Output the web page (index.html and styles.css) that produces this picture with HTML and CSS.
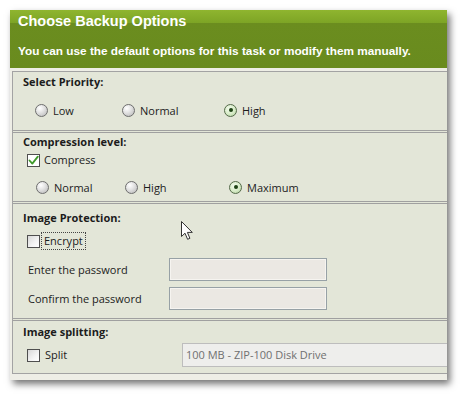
FILE: index.html
```html
<!DOCTYPE html>
<html>
<head>
<meta charset="utf-8">
<link rel="stylesheet" href="styles.css">
</head>
<body>
<div class="page">
  <div class="window">
    <div class="header">
      <div class="title">Choose Backup Options</div>
      <div class="subtitle">You can use the default options for this task or modify them manually.</div>
    </div>
    <div class="content">
      <section class="sec sec1">
        <div class="sec-title">Select Priority:</div>
        <div class="radio-row row-a">
          <div class="opt w87"><span class="radio"></span><span>Low</span></div>
          <div class="opt w102"><span class="radio"></span><span>Normal</span></div>
          <div class="opt"><span class="radio on"></span><span>High</span></div>
        </div>
      </section>
      <section class="sec sec2">
        <div class="sec-title">Compression level:</div>
        <div class="check-row">
          <span class="check"><svg width="11" height="11" viewBox="0 0 11 11"><path d="M1.5 5.5 L4.3 8.6 L9.8 1.6" fill="none" stroke="#3e9a2a" stroke-width="1.8" stroke-linejoin="round" stroke-linecap="round"/></svg></span>
          <span class="check-label">Compress</span>
        </div>
        <div class="radio-row row-b">
          <div class="opt w89"><span class="radio"></span><span>Normal</span></div>
          <div class="opt w104"><span class="radio"></span><span>High</span></div>
          <div class="opt"><span class="radio on"></span><span>Maximum</span></div>
        </div>
      </section>
      <section class="sec sec3">
        <div class="sec-title">Image Protection:</div>
        <div class="check-row enc">
          <span class="check"></span>
          <span class="check-label focus">Encrypt</span>
        </div>
        <div class="field-row first">
          <span class="field-label">Enter the password</span>
          <span class="field"></span>
        </div>
        <div class="field-row">
          <span class="field-label">Confirm the password</span>
          <span class="field"></span>
        </div>
      </section>
      <section class="sec sec4">
        <div class="sec-title">Image splitting:</div>
        <div class="split-row">
          <div class="split-check">
            <span class="check"></span>
            <span class="check-label">Split</span>
          </div>
          <div class="combo">100 MB - ZIP-100 Disk Drive</div>
        </div>
      </section>
    </div>
  </div>
  <svg class="cursor" width="13" height="20" viewBox="0 0 13 20"><path d="M0.5 0.5 L0.5 15.5 L4 12.2 L6.6 18.3 L8.9 17.3 L6.4 11.4 L11.3 11.4 Z" fill="#fff" stroke="#333" stroke-width="1" stroke-linejoin="round"/></svg>
</div>
</body>
</html>
```

FILE: styles.css
```css
html, body {
  margin: 0;
  padding: 0;
  background: #ffffff;
}
.page {
  position: relative;
  width: 465px;
  height: 399px;
  padding: 10px 0 0 10px;
  box-sizing: border-box;
  font-family: "Open Sans", "Noto Sans", sans-serif;
  font-size: 11px;
  color: #1c1c1c;
}
.window {
  width: 437px;
  background: #eeeee6;
  box-shadow: 3px 4px 7px rgba(0, 0, 0, 0.55);
  padding: 0 0 6px 2px;
  box-sizing: border-box;
  overflow: hidden;
}
.header {
  margin-left: -2px;
  height: 58px;
  background: linear-gradient(#8fb52f 0px, #7da425 13px, #6b8d1f 13px, #698b1e 58px);
  color: #ffffff;
  font-family: "Liberation Sans", Arial, sans-serif;
  font-weight: bold;
  padding-left: 8px;
  margin-bottom: 3px;
}
.title {
  font-size: 14.5px;
  line-height: 18px;
  padding-top: 2px;
}
.subtitle {
  font-size: 11.8px;
  line-height: 16px;
  margin-top: 13px;
}
.content {
  background: #e3e6d8;
  border-left: 1px solid #a3a3a3;
  border-top: 1px solid #a3a3a3;
  border-bottom: 1px solid #a3a3a3;
}
.sec {
  border-bottom: 3px double #a0a0a0;
}
.sec:last-child {
  border-bottom: none;
}
.sec-title {
  font-weight: bold;
  padding-left: 10px;
  height: 18px;
  line-height: 18px;
}
.sec1 .sec-title { height: 20px; line-height: 20px; }
.sec1 { padding-bottom: 11px; }
.sec2 { padding-bottom: 5px; }
.sec3 { padding-top: 5px; padding-bottom: 8px; }
.sec4 { padding-top: 2px; padding-bottom: 6px; }

.radio-row {
  display: flex;
  align-items: center;
  height: 18px;
}
.row-a { margin-top: 9px; padding-left: 22px; }
.row-b { margin-top: 10px; padding-left: 23px; }
.opt {
  display: flex;
  align-items: center;
  gap: 5px;
}
.w87 { width: 87px; }
.w102 { width: 102px; }
.w89 { width: 89px; }
.w104 { width: 104px; }

.radio {
  width: 13px;
  height: 13px;
  box-sizing: border-box;
  border-radius: 50%;
  border: 1px solid #6e6e6e;
  background: radial-gradient(circle at 35% 30%, #ffffff 0%, #e4e4e4 40%, #b4b4b4 100%);
  position: relative;
  flex: none;
}
.radio.on {
  border-color: #556a4a;
  background: radial-gradient(circle at 40% 35%, #f4fbee 0%, #d6ebc6 55%, #a9c895 100%);
}
.radio.on::after {
  content: "";
  position: absolute;
  left: 3.5px;
  top: 3.5px;
  width: 4px;
  height: 4px;
  border-radius: 50%;
  background: #1d4214;
}

.check-row {
  display: flex;
  align-items: center;
  height: 16px;
  margin-top: 1px;
  padding-left: 14px;
  gap: 4px;
}
.check {
  width: 13px;
  height: 13px;
  box-sizing: border-box;
  border: 1px solid #4f4f4f;
  background: linear-gradient(135deg, #d8d8d8 0%, #f4f4f4 60%, #ffffff 100%);
  display: flex;
  align-items: center;
  justify-content: center;
  flex: none;
}
.sec2 .check { background: #ffffff; }
.check-label {
  line-height: 16px;
}
.enc { margin-top: 6px; gap: 1px; }
.focus {
  border: 1px dotted #444;
  padding: 0 2px;
  line-height: 16px;
}

.field-row {
  display: flex;
  align-items: center;
  height: 23px;
  margin-top: 6px;
  padding-left: 15px;
}
.field-row.first { margin-top: 9px; }
.field-label {
  width: 141px;
}
.field {
  width: 158px;
  height: 23px;
  box-sizing: border-box;
  border: 1px solid #97a1a6;
  box-shadow: inset 0 0 0 1px #f6f4f0;
  background: #ebe8e3;
}

.split-row {
  display: flex;
  align-items: center;
  height: 24px;
  margin-top: 2px;
  padding-left: 14px;
  margin-right: -3px;
}
.split-check {
  display: flex;
  align-items: center;
  gap: 5px;
  width: 155px;
  flex: none;
}
.combo {
  flex: 1;
  min-width: 0;
  height: 24px;
  box-sizing: border-box;
  border: 1px solid #bdbdbd;
  background: #eeeeec;
  color: #707070;
  line-height: 22px;
  padding-left: 3px;
}
.cursor {
  position: absolute;
  left: 181px;
  top: 221px;
}
```
